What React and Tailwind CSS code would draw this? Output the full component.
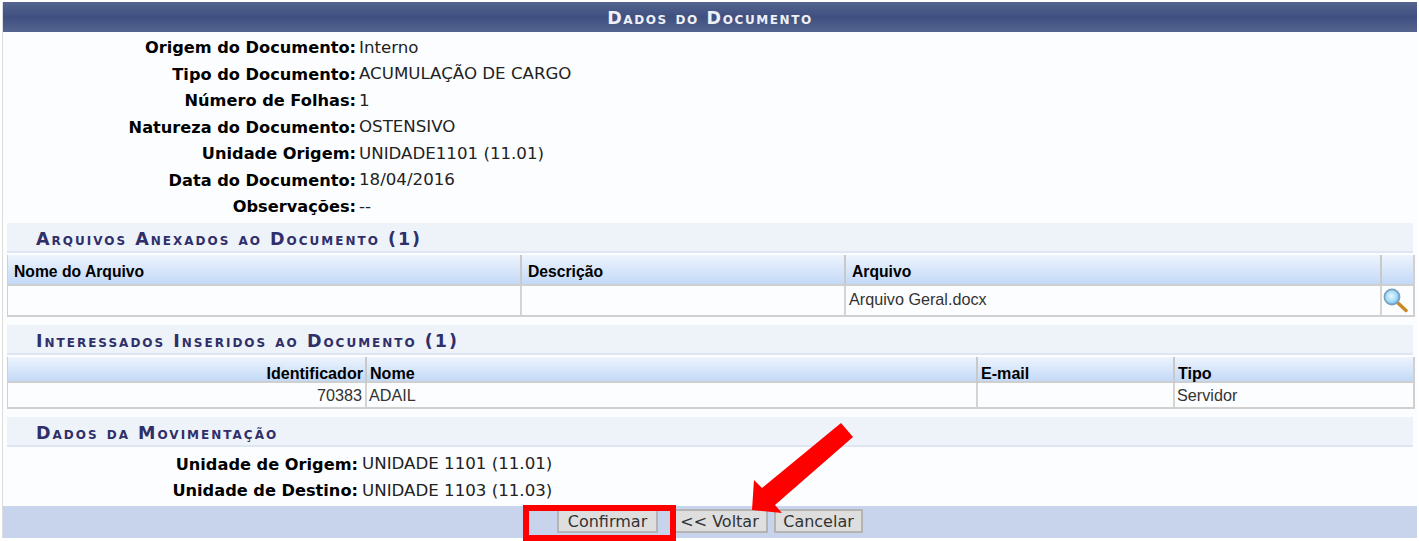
import React from 'react';

const docRows = [
  ['Origem do Documento:', 'Interno'],
  ['Tipo do Documento:', 'ACUMULAÇÃO DE CARGO'],
  ['Número de Folhas:', '1'],
  ['Natureza do Documento:', 'OSTENSIVO'],
  ['Unidade Origem:', 'UNIDADE1101 (11.01)'],
  ['Data do Documento:', '18/04/2016'],
  ['Observações:', '--'],
];

const moveRows = [
  ['Unidade de Origem:', 'UNIDADE 1101 (11.01)'],
  ['Unidade de Destino:', 'UNIDADE 1103 (11.03)'],
];

const InfoRow = ({ label, value, labelWidth, valueClass = 'pl-[4px]' }) => (
  <div className="flex h-[26.5px] items-center text-[16.65px] text-[#222]">
    <div className={`${labelWidth} text-right text-[16.2px] font-bold text-black`}>{label}</div>
    <div className={valueClass}>{value}</div>
  </div>
);

const Section = ({ title }) => (
  <div className="flex h-[30px] items-center bg-[#eef2f9] border-b-2 border-[#dfe6f3] pl-[29px] pt-[6px] text-[17.5px] font-bold tracking-[2px] text-[#2f2f6a] [font-variant:small-caps]">
    {title}
  </div>
);

const HeadCell = ({ className = '', children }) => (
  <div className={`flex items-center border-r-2 border-[#c9c9c9] last:border-r-0 px-[6px] font-bold text-black ${className}`}>
    {children}
  </div>
);

const BodyCell = ({ className = '', children }) => (
  <div className={`flex items-center border-r-2 border-[#d4d4d4] last:border-r-0 text-[16.2px] text-[#333] ${className}`}>
    {children}
  </div>
);

const Magnifier = () => (
  <svg width="26" height="26" viewBox="0 0 26 26">
    <defs>
      <radialGradient id="lens" cx="45%" cy="45%" r="60%">
        <stop offset="0%" stopColor="#e8f7ff" />
        <stop offset="65%" stopColor="#9fd8f5" />
        <stop offset="100%" stopColor="#4f9fd8" />
      </radialGradient>
    </defs>
    <line x1="16" y1="16" x2="24" y2="23.5" stroke="#c98a25" strokeWidth="3.4" strokeLinecap="round" />
    <circle cx="10" cy="10" r="7.6" fill="url(#lens)" stroke="#7d9fc0" strokeWidth="1.6" />
  </svg>
);

const App = () => {
  return (
    <div className="relative h-[541px] w-[1419px] overflow-hidden bg-white font-['DejaVu_Sans',sans-serif]">
      <div className="mx-[2px] mt-[2px] border-l border-[#dcdcdc] bg-[#fcfdfe]">
        {/* Title */}
        <div className="flex h-[30px] items-center justify-center bg-gradient-to-b from-[#55658f] via-[#3f4f80] to-[#55658f] pt-[2px] text-[17.5px] font-bold tracking-[1.6px] text-[#eef0f6] [font-variant:small-caps]">
          Dados do Documento
        </div>

        <div className="px-[4px]">
          <div className="pt-[3px] pb-[2px]">
            {docRows.map(([label, value]) => (
              <InfoRow key={label} label={label} value={value} labelWidth="w-[349px]" valueClass="pl-[3px]" />
            ))}
          </div>

          <Section title="Arquivos Anexados ao Documento (1)" />

          {/* Files table */}
          <div className="mt-[2px] mr-[-2px] border-r-2 border-b-2 border-l border-[#d0d0d0] font-['Liberation_Sans',sans-serif] text-[15.7px]">
            <div className="grid h-[31px] grid-cols-[514px_324px_536px_1fr] border-b-2 border-[#cfcfcf] bg-gradient-to-b from-[#eef4fd] to-[#c3d9f7]">
              <HeadCell className="pt-[5px]">Nome do Arquivo</HeadCell>
              <HeadCell className="pt-[5px]">Descrição</HeadCell>
              <HeadCell className="pt-[5px]">Arquivo</HeadCell>
              <HeadCell></HeadCell>
            </div>
            <div className="grid h-[29px] grid-cols-[514px_324px_536px_1fr]">
              <BodyCell />
              <BodyCell />
              <BodyCell className="pl-[3px] pb-[1px]">Arquivo Geral.docx</BodyCell>
              <BodyCell className="pb-[1px]"><Magnifier /></BodyCell>
            </div>
          </div>

          <div className="mt-[8px]">
            <Section title="Interessados Inseridos ao Documento (1)" />
          </div>

          {/* Interested table */}
          <div className="mt-[2px] mr-[-2px] border-r-2 border-b-2 border-l border-[#d0d0d0] font-['Liberation_Sans',sans-serif] text-[16.1px]">
            <div className="grid h-[26px] grid-cols-[359px_611px_197px_1fr] border-b-2 border-[#cfcfcf] bg-gradient-to-b from-[#eef4fd] to-[#c3d9f7]">
              <HeadCell className="justify-end !pr-[2px] pt-[4px]">Identificador</HeadCell>
              <HeadCell className="!pl-[3px] pt-[4px]">Nome</HeadCell>
              <HeadCell className="!pl-[3px] pt-[4px]">E-mail</HeadCell>
              <HeadCell className="!pl-[3px] pt-[4px]">Tipo</HeadCell>
            </div>
            <div className="grid h-[24px] grid-cols-[359px_611px_197px_1fr]">
              <BodyCell className="justify-end pr-[3px]">70383</BodyCell>
              <BodyCell className="pl-[2px]">ADAIL</BodyCell>
              <BodyCell />
              <BodyCell className="pl-[2px]">Servidor</BodyCell>
            </div>
          </div>

          <div className="mt-[8px]">
            <Section title="Dados da Movimentação" />
          </div>

          <div className="pt-[5px] pb-[1px]">
            {moveRows.map(([label, value]) => (
              <InfoRow key={label} label={label} value={value} labelWidth="w-[351px]" />
            ))}
          </div>
        </div>

        {/* Buttons */}
        <div className="flex h-[32px] items-start justify-center gap-[6px] bg-[#c8d4eb] pt-[3px] text-[16px] text-[#333]">
          <button className="mr-[7px] h-[24px] w-[101px] border-2 border-[#b4b4b4] bg-[#dedede] pt-[2px] leading-none">Confirmar</button>
          <button className="h-[24px] w-[97px] border-2 border-[#b4b4b4] bg-[#dedede] pt-[2px] leading-none">&lt;&lt; Voltar</button>
          <button className="h-[24px] w-[89px] border-2 border-[#b4b4b4] bg-[#dedede] pt-[2px] leading-none">Cancelar</button>
        </div>
      </div>

      {/* Red annotations over the screenshot */}
      <div className="absolute left-[523px] top-[505px] h-[36px] w-[153px] border-[6px] border-[#ff0000]" />
      <svg className="absolute left-0 top-0" width="1419" height="541">
        <polygon points="841,423 853,437 775,505 782,513 752,510 754,480 762,488" fill="#ff0000" />
      </svg>
    </div>
  );
};

export default App;
